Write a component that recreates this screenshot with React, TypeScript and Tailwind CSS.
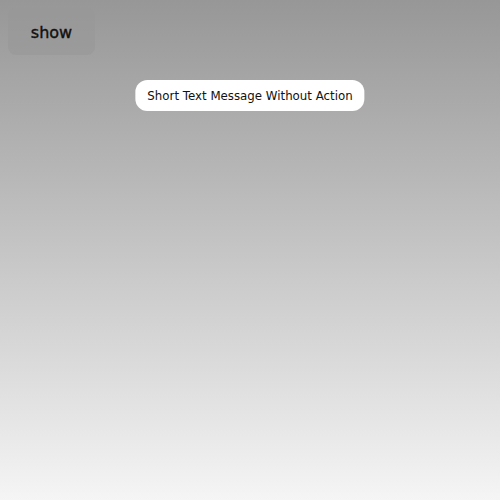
export default function App() {
  return (
    <div className="relative h-[500px] w-[500px] overflow-hidden bg-gradient-to-b from-[#979797] to-[#f5f5f5] font-['DejaVu_Sans',sans-serif]">
      <div className="p-2">
        <button className="flex h-[47px] w-[87px] items-center justify-center rounded-lg bg-[#979797]/60 pt-0.5 text-base text-black/90 [-webkit-text-stroke:0.4px_#111]">
          show
        </button>
      </div>
      <div className="absolute left-1/2 top-[80px] flex h-[31px] -translate-x-1/2 items-center rounded-xl bg-white px-3 pt-0.5 text-[11.8px] whitespace-nowrap text-[#111]">
        Short Text Message Without Action
      </div>
    </div>
  );
}
